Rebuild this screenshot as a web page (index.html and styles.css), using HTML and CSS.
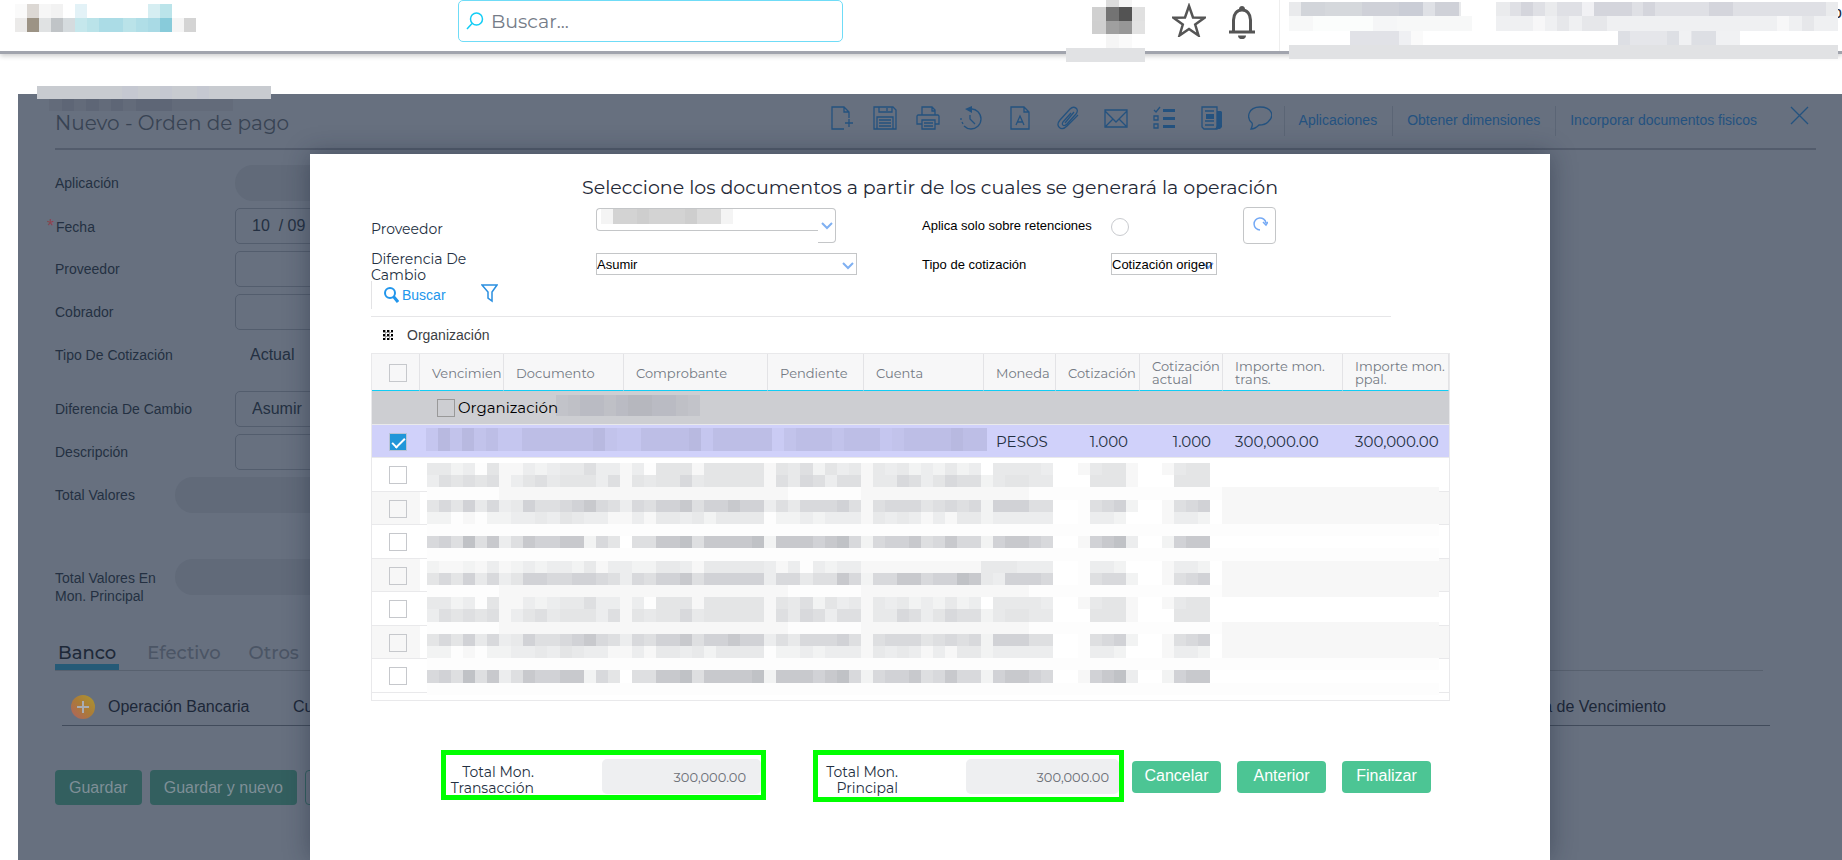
FILE: index.html
```html
<!DOCTYPE html>
<html lang="es">
<head>
  <meta charset="UTF-8">
  <meta name="viewport" content="width=device-width, initial-scale=1.0">
  <title>Nuevo - Orden de pago</title>
  <link rel="stylesheet" href="styles.css">
</head>
<body>
  <header class="topbar">
    <svg class="logo" width="182" height="32" viewBox="0 0 182 32" shape-rendering="crispEdges" aria-hidden="true">
      <path fill="#fafafa" d="M0 4h12v14H0z"/><path fill="#dcd8d4" d="M12 4h12v14H12z"/><path fill="#f6f6f6" d="M24 4h12v14H24z"/><path fill="#f2f2f2" d="M36 4h12v14H36z"/><path fill="#e3f2f7" d="M60 4h12v14H60z"/>
      <path fill="#d6eef2" d="M133 4h12v14h-12z"/><path fill="#bbe4ea" d="M145 4h12v14h-12z"/>
      <path fill="#ebeae9" d="M0 18h12v14H0z"/><path fill="#9c9385" d="M12 18h12v14H12z"/><path fill="#e0e2e3" d="M24 18h12v14H24z"/><path fill="#c0c4c7" d="M36 18h12v14H36z"/><path fill="#d5dbde" d="M48 18h12v14H48z"/>
      <path fill="#c5e7ec" d="M60 18h12v14H60z"/><path fill="#bae3e9" d="M72 18h12v14H72z"/><path fill="#abdce6" d="M84 18h24v14H84z"/><path fill="#bae3e9" d="M108 18h13v14h-13z"/><path fill="#b0dee7" d="M121 18h12v14h-12z"/><path fill="#a9dae5" d="M133 18h12v14h-12z"/><path fill="#88cbda" d="M145 18h12v14h-12z"/><path fill="#f5f5f5" d="M157 18h12v14h-12z"/><path fill="#d4d4d4" d="M169 18h12v14h-12z"/>
    </svg>
    <div class="search">
      <svg width="18" height="18" viewBox="0 0 18 18" fill="none" stroke="#12cdf5" stroke-width="1.5"><circle cx="10.500" cy="7" r="6"/><path d="M6 11.500L1 17"/></svg>
      <input type="text" placeholder="Buscar..." aria-label="Buscar">
    </div>
    <div class="top-actions">
      <svg class="user-mask" width="79" height="62" viewBox="0 0 79 62" shape-rendering="crispEdges" aria-hidden="true">
        <path fill="#dcdcdc" d="M40 0h13v7H40z"/><path fill="#f5f5f5" d="M53 0h13v7H53z"/>
        <path fill="#d0d0d0" d="M26 7h14v14H26z"/><path fill="#737373" d="M40 7h13v14H40z"/><path fill="#535353" d="M53 7h13v14H53z"/><path fill="#e0e0e0" d="M66 7h13v14H66z"/>
        <path fill="#cfcfcf" d="M26 21h14v13H26z"/><path fill="#9f9f9f" d="M40 21h13v13H40z"/><path fill="#979797" d="M53 21h13v13H53z"/><path fill="#e2e2e2" d="M66 21h13v13H66z"/>
        <path fill="#f5f5f5" d="M40 34h13v14H40z"/><path fill="#fafafa" d="M53 34h13v14H53z"/>
        <path fill="#e1e2e4" d="M0 48h79v14H0z"/>
      </svg>
      <svg class="star" width="34" height="34" viewBox="0 0 34 34" fill="none" stroke="#555" stroke-width="2.500"><path d="M17 3l4 11.500 11.500.2-9.300 6.800 3.300 11-9.500-6.500-9.500 6.500 3.300-11-9.300-6.800L13 14.500z"/></svg>
      <svg class="bell" width="26" height="34" viewBox="0 0 26 34"><path fill="none" stroke="#555" stroke-width="3" d="M4.500 27V15c0-6 3.500-10 8.500-10s8.500 4 8.500 10v12"/><path fill="#555" d="M10 4c0-4 6-4 6 0zM0 25.500h26v3H0zM9 30.500h8c0 5-8 5-8 0z"/></svg>
      <div class="account">
        <svg width="549" height="59" viewBox="0 0 549 59" shape-rendering="crispEdges" aria-hidden="true">
          <path fill="#e9eaec" d="M0 2h172v14H0z"/><path fill="#d2d5da" d="M12 2h24v14H12z"/><path fill="#d5d8dc" d="M36 2h37v14H36z"/><path fill="#cfd1d8" d="M73 2h37v14H73z"/><path fill="#cacdd6" d="M110 2h24v14h-24z"/><path fill="#dfe1e6" d="M134 2h12v14h-12z"/><path fill="#cfd1d8" d="M146 2h24v14h-24z"/>
          <path fill="#f7f8f8" d="M0 16h183v15H0z"/><path fill="#fbfdfc" d="M24 16h60v15H24z"/><path fill="#f5f6f7" d="M84 16h24v15H84z"/>
          <path fill="#e1e2e7" d="M61 31h49v14H61z"/><path fill="#eff0f3" d="M110 31h12v14h-12z"/><path fill="#fafafa" d="M122 31h12v14h-12z"/>
          <path fill="#dfe0e5" d="M207 2h342v14H207z"/><path fill="#f1f1f4" d="M293 2h12v14h-12z"/><path fill="#d4d5dc" d="M232 2h12v14h-12zM305 2h38v14h-38zM354 2h12v14h-12zM420 2h24v14h-24z"/><path fill="#eaebed" d="M207 2h14v14h-14zM537 2h12v14h-12zM256 2h12v14h-12z"/>
          <path fill="#eff0f2" d="M207 16h342v15H207z"/><path fill="#e6e7ea" d="M268 16h12v15h-12zM293 16h25v15h-25zM513 16h12v15h-12z"/><path fill="#f7f7f8" d="M244 16h12v15h-12zM488 16h12v15h-12z"/>
          <path fill="#e5e6ea" d="M329 31h100v14H329z"/><path fill="#dddfe4" d="M329 31h12v14h-12zM378 31h12v14h-12zM403 31h24v14h-24z"/><path fill="#f0f1f3" d="M390 31h12v14h-12zM427 31h24v14h-24z"/>
          <path fill="#e1e2e4" d="M0 45h549v14H0z"/>
        </svg>
        <span>o</span>
      </div>
    </div>
  </header>

  <main class="panel">
    <svg class="crumb-mask" width="234" height="25" viewBox="0 0 234 25" shape-rendering="crispEdges" aria-hidden="true">
      <path fill="#c8cbd0" d="M0 0h234v13H0z"/><path fill="#c5c8d1" d="M85 0h16v13H85zM123 0h12v13h-12zM160 0h12v13h-12z"/>
      <path fill="#636b7a" d="M12 13h184v12H12z"/><path fill="#5e6676" d="M25 13h12v12H25zM49 13h13v12H49zM74 13h12v12H74zM99 13h36v12H99z"/>
    </svg>
    <div class="panel-head">
      <h1>Nuevo - Orden de pago</h1>
      <div class="tools">
        <div class="tool-group">
          <button aria-label="Nuevo"><svg width="24" height="24" viewBox="0 0 24 24"><path d="M14 23H2V1h12l5 5v6M14 1v5h5M19 13v8M15 17h8"/></svg></button>
          <button aria-label="Guardar"><svg width="24" height="24" viewBox="0 0 24 24"><path d="M1 1h19l3 3v19H1zM6 1v5h13V1M14 2v3M4 23V11h16v12M6 14h12M6 17h12M6 20h12"/></svg></button>
          <button aria-label="Imprimir"><svg width="24" height="24" viewBox="0 0 24 24"><path d="M6 9V1h10l3 3v5M16 1v4h3M6 18H1v-8l1-1h20l1 1v8h-4M6 14h13v9H6zM8 17h9M8 20h9"/></svg></button>
          <button aria-label="Historial"><svg width="24" height="24" viewBox="0 0 24 24"><path d="M13 3c4 0 9 4 9 10s-5 10-10 10c-3 0-5-1-7-3M4 18l-1-2M2 14v-2M11 9v4l5 5"/><path class="solid" d="M6 3l7-3v7z"/></svg></button>
        </div>
        <div class="tool-group wide">
          <button aria-label="Texto"><svg width="24" height="24" viewBox="0 0 24 24"><path d="M3 1h13l5 5v17H3zM16 1v5h5M8 19l4-9 4 9M9 16h6"/></svg></button>
          <button aria-label="Adjuntar"><svg width="24" height="24" viewBox="0 0 24 24"><path d="M15 7l-8 9c-2 3 1 5 4 2l9-10c4-5-2-9-6-5L4 14c-5 6 1 12 7 6L22 9M18 6l-9 11"/></svg></button>
          <button aria-label="Correo"><svg width="24" height="24" viewBox="0 0 24 24"><path d="M1 4h22v17H1zM1 5l11 11L23 5M2 20l7-7M22 20l-7-7"/></svg></button>
          <button aria-label="Tareas"><svg width="24" height="24" viewBox="0 0 24 24"><path d="M2 4l2 2 4-5M2 10h4v4H2zM2 18h4v4H2z"/><path class="solid" d="M11 3h12v3H11zM11 11h12v3H11zM11 19h12v3H11z"/></svg></button>
          <button aria-label="Noticias"><svg width="24" height="24" viewBox="0 0 24 24"><path d="M2 1h15v22H4l-2-2zM5 5h9M5 15h9M5 19h9"/><path class="solid" d="M6 8h8v5H6zM17 5h4l1 1v15l-2 2h-5l2-3z"/></svg></button>
          <button aria-label="Comentar"><svg width="24" height="24" viewBox="0 0 24 24"><path d="M4 17C-2 12 0 1 12 1s15 9 8 15c-3 3-7 3-9 3-2 2-5 4-8 4 1-2 2-4 1-6z"/></svg></button>
        </div>
        <a href="#">Aplicaciones</a>
        <a href="#">Obtener dimensiones</a>
        <a href="#">Incorporar documentos fisicos</a>
        <button class="close" aria-label="Cerrar"><svg width="19" height="19" viewBox="0 0 19 19"><path d="M1 1l17 17M18 1L1 18"/></svg></button>
      </div>
    </div>

    <form class="order-form">
      <div class="row"><label for="aplicacion">Aplicación</label><input id="aplicacion" class="pill" disabled></div>
      <div class="row required"><label for="fecha">Fecha</label><input id="fecha" value="10  / 09"></div>
      <div class="row"><label for="proveedor">Proveedor</label><input id="proveedor"></div>
      <div class="row"><label for="cobrador">Cobrador</label><input id="cobrador"></div>
      <div class="row plain"><label for="tipo">Tipo De Cotización</label><input id="tipo" value="Actual" readonly></div>
      <div class="row"><label for="diferencia">Diferencia De Cambio</label><input id="diferencia" value="Asumir"></div>
      <div class="row"><label for="descripcion">Descripción</label><input id="descripcion"></div>
      <div class="row total"><label for="valores">Total Valores</label><input id="valores" class="pill" disabled></div>
      <div class="row total"><label for="principal">Total Valores En Mon. Principal</label><input id="principal" class="pill" disabled></div>
    </form>

    <nav class="tabs">
      <a href="#" class="active">Banco</a>
      <a href="#">Efectivo</a>
      <a href="#">Otros</a>
    </nav>
    <div class="bank-row">
      <button class="add" aria-label="Agregar"><svg width="24" height="24" viewBox="0 0 24 24"><defs><linearGradient id="sun" x1="0" y1="1" x2="1" y2="0"><stop offset="0" stop-color="#b06262"/><stop offset=".5" stop-color="#ab7b38"/><stop offset="1" stop-color="#ab9730"/></linearGradient></defs><circle cx="12" cy="12" r="12" fill="url(#sun)"/><path d="M12 6v12M6 12h12" stroke="#a9adb3" stroke-width="2"/></svg></button>
      <span class="bank">Operación Bancaria</span>
      <span>Cuenta</span>
      <span class="due">Fecha de Vencimiento</span>
    </div>
    <div class="form-buttons">
      <button>Guardar</button>
      <button>Guardar y nuevo</button>
      <button class="outline">Cancelar</button>
    </div>

    <section class="modal" role="dialog" aria-labelledby="modal-title">
      <h2 id="modal-title">Seleccione los documentos a partir de los cuales se generará la operación</h2>

      <div class="filters">
        <label for="f-prov">Proveedor</label>
        <div class="picker">
          <input id="f-prov" type="text">
          <svg class="mask" width="132" height="15" viewBox="0 0 132 15" shape-rendering="crispEdges" aria-hidden="true"><path fill="#f4f4f4" d="M0 0h132v15H0z"/><path fill="#d3d3d3" d="M12 0h84v15H12z"/><path fill="#cecece" d="M36 0h12v15H36zM84 0h12v15H84z"/><path fill="#dadada" d="M96 0h24v15H96z"/></svg>
          <button aria-label="Abrir"><svg width="12" height="8" viewBox="0 0 12 8"><path d="M1 1l5 5 5-5"/></svg></button>
        </div>
        <label class="small" for="f-ret">Aplica solo sobre retenciones</label>
        <div class="with-refresh">
          <input id="f-ret" type="radio">
          <button class="refresh" aria-label="Actualizar"><svg width="16" height="16" viewBox="0 0 16 16"><path d="M8 14a6 6 0 1 1 6-7M11 6l3 3 2-3"/></svg></button>
        </div>

        <label class="second-line" for="f-dif">Diferencia De Cambio</label>
        <div class="combo">
          <svg width="12" height="8" viewBox="0 0 12 8"><path d="M1 1l5 5 5-5"/></svg>
          <select id="f-dif"><option>Asumir</option></select>
        </div>
        <label class="small second-line" for="f-cot">Tipo de cotización</label>
        <div class="combo narrow">
          <svg width="12" height="8" viewBox="0 0 12 8"><path d="M1 1l5 5 5-5"/></svg>
          <select id="f-cot"><option>Cotización origen</option></select>
        </div>
      </div>

      <div class="grid-tools">
        <button class="find"><svg width="15" height="16" viewBox="0 0 15 16" fill="none" stroke="#2196ec"><circle cx="6" cy="6" r="5" stroke-width="2"/><path d="M9.500 9.500L14 15" stroke-width="3"/></svg>Buscar</button>
        <button aria-label="Filtrar"><svg width="17" height="19" viewBox="0 0 17 19" fill="none" stroke="#2a8fe0" stroke-width="1.500"><path d="M1 1h15l-5 7v9l-4-3V8z"/></svg></button>
      </div>
      <div class="group-by">
        <svg width="10" height="10" viewBox="0 0 10 10" shape-rendering="crispEdges"><path d="M0 0h2v2H0zM4 0h2v2H4zM8 0h2v2H8zM0 4h2v2H0zM4 4h2v2H4zM8 4h2v2H8zM0 8h2v2H0zM4 8h2v2H4zM8 8h2v2H8z"/><path fill="#000" fill-opacity=".4" d="M0 2h10v1H0zM0 6h10v1H0zM2 0h1v10H2zM6 0h1v10H6z"/></svg>
        <span>Organización</span>
      </div>

      <div class="grid">
        <table>
          <colgroup>
            <col class="c-check"><col class="c-venc"><col class="c-doc"><col class="c-comp"><col class="c-pend"><col class="c-doc"><col class="c-mon"><col class="c-cot"><col class="c-act"><col class="c-doc"><col>
          </colgroup>
          <thead>
            <tr>
              <th><input type="checkbox" aria-label="Seleccionar todo"></th>
              <th>Vencimien</th>
              <th>Documento</th>
              <th>Comprobante</th>
              <th>Pendiente</th>
              <th>Cuenta</th>
              <th>Moneda</th>
              <th>Cotización</th>
              <th>Cotización actual</th>
              <th>Importe mon. trans.</th>
              <th>Importe mon. ppal.</th>
            </tr>
          </thead>
          <tbody>
            <tr class="group">
              <td colspan="11">
                <div class="group-cell"><input type="checkbox" id="org"><label for="org">Organización</label><div class="mosaic dark" data-rows="345545665543"></div></div>
              </td>
            </tr>
            <tr class="selected">
              <td><input type="checkbox" aria-label="Seleccionar" checked></td>
              <td colspan="5"><div class="mosaic dark wide" data-rows="36464533555555643355556355555245554555345555655"></div></td>
              <td>PESOS</td>
              <td class="num">1.000</td>
              <td class="num">1.000</td>
              <td>300,000.00</td>
              <td>300,000.00</td>
            </tr>
            <tr><td><input type="checkbox" aria-label="Seleccionar"></td><td colspan="9"></td><td></td></tr>
            <tr><td><input type="checkbox" aria-label="Seleccionar"></td><td colspan="9"></td><td></td></tr>
            <tr><td><input type="checkbox" aria-label="Seleccionar"></td><td colspan="9"></td><td></td></tr>
            <tr><td><input type="checkbox" aria-label="Seleccionar"></td><td colspan="9"></td><td></td></tr>
            <tr><td><input type="checkbox" aria-label="Seleccionar"></td><td colspan="9"></td><td></td></tr>
            <tr><td><input type="checkbox" aria-label="Seleccionar"></td><td colspan="9"></td><td></td></tr>
            <tr><td><input type="checkbox" aria-label="Seleccionar"></td><td colspan="9"></td><td></td></tr>
          </tbody>
        </table>
        <div class="mosaic cover" id="cover"></div>
      </div>

      <div class="footer">
        <div class="sum"><label for="t-trans">Total Mon. Transacción</label><input id="t-trans" value="300,000.00" readonly></div>
        <div class="sum second"><label for="t-ppal">Total Mon. Principal</label><input id="t-ppal" value="300,000.00" readonly></div>
        <div class="actions">
          <button>Cancelar</button>
          <button>Anterior</button>
          <button>Finalizar</button>
        </div>
      </div>
    </section>
  </main>

  <script>
    // one string per band, one character per cell: 0 is empty, B is the darkest
    var bandA = "553416224345574424166626666626573645254534353405555400256620025660";
    var bandB = "476767246756664726566856666627587477255874687735665500066620006660";
    var bandC = "111111222222222222222222222222111111222222222222221111111111111111";
    var bandD = "6869584597789A8748799A799A9947588897278886787839997700178930027890";
    var bandE = "331213344546544224255453555513343444254542425534444400144300024430";
    var bandF = "111111111111111111111111111111111111111111111111111111111111111111";
    var bandG = "897B7A47A99AA386077AAB7AAAAB3AAA9AB83899A78A8839AA980029AB40039AA0";
    var bandI = "322324234344352443355425555542414344222222222255544400144300024430";
    var bandJ = "686958469988998748799A799999488577A8388AA899BA54999800178830027890";
    var bands = [
      [bandA, "0"], [bandB, "0"], [bandC, "2"], [bandD, "2"], [bandE, "2"], [bandF, "1"],
      [bandG, "0"], [bandF, "1"], [bandI, "2"], [bandJ, "2"], [bandC, "2"],
      [bandA, "0"], [bandB, "0"], [bandC, "2"], [bandD, "2"], [bandE, "2"], [bandF, "1"],
      [bandG, "0"], [bandF, "1"]
    ];

    function drawBand(box, text) {
      var html = "<div class='band'>";
      text.split("").forEach(function(level) {
        html += "<i class='l" + level + "'></i>";
      });
      box.innerHTML += html + "</div>";
    }

    document.querySelectorAll("[data-rows]").forEach(function(box) {
      drawBand(box, box.dataset.rows);
    });

    var cover = document.getElementById("cover");
    bands.forEach(function(band) {
      drawBand(cover, band[0].padEnd(84, band[1]));
    });
  </script>
</body>
</html>
```
FILE: styles.css
```css
* {
  box-sizing: border-box;
}

body {
  margin: 0;
  min-height: 100vh;
  display: flex;
  flex-direction: column;
  overflow: hidden;
  background: #fff;
  color: #1f2937;
  font-family: "Liberation Sans", Arial, sans-serif;
  font-size: 14px;
}

button, input, select {
  font-family: inherit;
  margin: 0;
}

button {
  border: 0;
  padding: 0;
  background: none;
  cursor: pointer;
}

/* top bar */
.topbar {
  display: flex;
  align-items: flex-start;
  height: 54px;
  padding-left: 15px;
  border-bottom: 3px solid #a1a4ad;
  box-shadow: 0 2px 5px rgba(0, 0, 0, 0.2);
}

.search {
  display: flex;
  align-items: center;
  gap: 5px;
  width: 385px;
  height: 42px;
  margin-left: 261px;
  padding: 0 7px;
  border: 1px solid #6fdcf7;
  border-radius: 5px;
}

.search input {
  flex: 1;
  border: 0;
  outline: 0;
  font-family: "Montserrat", "Inter", sans-serif;
  font-size: 19px;
  color: #6b7280;
}

.search input::placeholder {
  color: #757c88;
}

.top-actions {
  display: flex;
  align-items: flex-start;
  margin-left: auto;
}

.star {
  margin: 3px 23px 0 27px;
}

.bell {
  margin-top: 5px;
}

.account {
  display: flex;
  height: 51px;
  margin-left: 24px;
  padding-left: 9px;
  border-left: 1px solid #eee;
}

.account span {
  width: 4px;
  padding-top: 4px;
  overflow: hidden;
  direction: rtl;
  font-size: 16px;
}

.user-mask, .account svg {
  flex-shrink: 0;
  overflow: visible;
}

/* dimmed page under the dialog */
.panel {
  position: relative;
  flex: 1;
  margin: 40px 0 0 18px;
  padding: 0 26px 0 37px;
  background: #67707f;
  color: #243042;
}

.crumb-mask {
  position: absolute;
  top: -8px;
  left: 19px;
}

.panel-head {
  display: flex;
  justify-content: space-between;
  height: 56px;
  border-bottom: 2px solid #535c6c;
}

.panel-head h1 {
  margin: 17px 0 0;
  font: 400 20px/24px "Montserrat", "Inter", sans-serif;
  color: #384353;
}

.tools {
  display: flex;
  align-items: flex-start;
  padding: 12px 7px 0 0;
}

.tools svg {
  display: block;
  fill: none;
  stroke: #24527f;
  stroke-width: 1.3;
}

.tools .solid {
  fill: #24527f;
  stroke: none;
}

.tool-group {
  display: flex;
  gap: 19px;
  margin-right: 25px;
}

.tool-group.wide {
  gap: 24px;
  margin-right: 12px;
}

.tools a {
  height: 30px;
  padding: 0 15px 0 14px;
  border-left: 1px solid #5b6575;
  line-height: 29px;
  color: #24527f;
  text-decoration: none;
}

.close {
  margin-left: 18px;
}

.order-form {
  padding-top: 15px;
}

.row {
  display: flex;
  align-items: center;
  height: 36px;
  margin-bottom: 7px;
}

.row label {
  width: 180px;
}

.row input {
  width: 400px;
  height: 36px;
  padding: 0 16px;
  border: 1px solid #535d6d;
  border-radius: 5px;
  background: transparent;
  font-size: 16px;
  color: #243042;
}

.row .pill {
  border: 0;
  border-radius: 18px;
  background: #616a79;
}

.required label::before {
  content: "*";
  margin: 0 2px 0 -8px;
  font-size: 18px;
  line-height: 16px;
  color: #8d4450;
}

.plain {
  margin-bottom: 18px;
}

.plain input {
  border-color: transparent;
  padding: 0 14px;
}

.total label {
  width: 120px;
  line-height: 18px;
}

.total + .total {
  margin-top: 46px;
}

.total + .total label {
  padding-top: 20px;
}

.tabs {
  display: flex;
  gap: 28px;
  margin: 40px 53px 0 0;
  border-bottom: 1px solid #58616f;
}

.tabs a {
  height: 35px;
  font: 500 18px/36px "Montserrat", "Inter", sans-serif;
  color: #4b5565;
  text-decoration: none;
}

.tabs .active {
  padding: 0 3px;
  margin-bottom: -1px;
  border-bottom: 6px solid #255a77;
  color: #1e2939;
}

.bank-row {
  display: flex;
  align-items: center;
  height: 55px;
  margin: 0 46px 0 7px;
  padding-top: 17px;
  padding-left: 9px;
  border-bottom: 1px solid #414b5b;
  font-size: 16px;
  color: #1c2738;
}

.add svg {
  display: block;
}

.bank {
  width: 185px;
  margin-left: 13px;
}

.due {
  margin-left: auto;
  padding-right: 104px;
}

.form-buttons {
  display: flex;
  gap: 8px;
  margin-top: 44px;
}

.form-buttons button {
  height: 35px;
  padding: 0 14px;
  border-radius: 4px;
  background: #335f5f;
  font-size: 16px;
  color: #7f8f97;
}

.form-buttons .outline {
  border: 1px solid #335f5f;
  background: transparent;
}

/* dialog */
.modal {
  position: absolute;
  top: 60px;
  right: 292px;
  bottom: 0;
  left: 292px;
  padding: 20px 100px 0 61px;
  background: #fff;
  box-shadow: 0 0 24px rgba(20, 30, 50, 0.4);
}

.modal h2 {
  margin: 0 -100px 0 -61px;
  font: 400 19px/28px "Montserrat", "Inter", sans-serif;
  text-align: center;
  color: #1f2937;
}

.filters {
  display: grid;
  grid-template-columns: 225px 326px 189px 1fr;
  grid-template-rows: 44px 35px;
  align-items: start;
  padding-top: 5px;
}

.filters label {
  max-width: 120px;
  padding-top: 14px;
  font: 400 14px/16px "Montserrat", "Inter", sans-serif;
}

.filters .small {
  max-width: none;
  padding-top: 11px;
  font: 13px/16px "Liberation Sans", Arial, sans-serif;
  color: #000;
}

.filters .second-line {
  padding-top: 0;
}

.filters .small.second-line {
  padding-top: 6px;
}

.picker {
  display: flex;
  align-items: flex-start;
  position: relative;
  width: 240px;
  padding-top: 1px;
}

.picker input {
  flex: 1;
  min-width: 0;
  height: 23px;
  border: 1px solid #c4c6c8;
  border-right: 0;
  border-radius: 4px 0 0 4px;
  background: transparent;
}

.picker .mask {
  position: absolute;
  top: 2px;
  left: 5px;
}

.picker button {
  width: 18px;
  height: 35px;
  border: 1px solid #c4c6c8;
  border-left: 0;
  border-radius: 0 4px 4px 0;
}

.picker button svg, .combo svg {
  fill: none;
  stroke: #7fb0f2;
  stroke-width: 2;
}

.with-refresh {
  display: flex;
  align-items: flex-start;
}

.with-refresh input {
  appearance: none;
  width: 18px;
  height: 18px;
  margin: 11px 114px 0 0;
  border: 1px solid #c9cbcf;
  border-radius: 50%;
}

.refresh {
  width: 33px;
  height: 37px;
  border: 1px solid #c4c6c8;
  border-radius: 4px;
}

.refresh svg {
  fill: none;
  stroke: #74a9f5;
  stroke-width: 1.5;
}

.combo {
  position: relative;
  width: 261px;
  padding-top: 2px;
}

.combo.narrow {
  width: 106px;
}

.combo select {
  position: relative;
  appearance: none;
  width: 100%;
  height: 22px;
  padding: 0;
  border: 1px solid #c4c6c8;
  border-radius: 0;
  background: transparent;
  font-size: 13px;
  color: #000;
}

.combo svg {
  position: absolute;
  top: 11px;
  right: 3px;
}

.grid-tools {
  display: flex;
  align-items: center;
  height: 28px;
  gap: 35px;
  margin: -5px 0 7px;
  padding: 0 0 0 12px;
  border-left: 1px solid #e3e3e5;
}

.find {
  display: flex;
  align-items: center;
  gap: 3px;
  font-size: 14px;
  color: #2196ec;
}

.group-by {
  display: flex;
  align-items: center;
  gap: 14px;
  height: 37px;
  margin-right: 59px;
  padding-left: 12px;
  border-top: 1px solid #e6e6e8;
  color: #3c4043;
}

.grid {
  position: relative;
  height: 348px;
  border: 1px solid #e9e9eb;
}

table {
  width: 100%;
  table-layout: fixed;
  border-collapse: separate;
  border-spacing: 0;
  font-family: "Montserrat", "Inter", sans-serif;
}

.c-check { width: 48px; }
.c-venc { width: 84px; }
.c-doc { width: 120px; }
.c-comp { width: 144px; }
.c-pend { width: 96px; }
.c-mon { width: 72px; }
.c-cot { width: 84px; }
.c-act { width: 83px; }

th {
  height: 37px;
  padding: 2px 0 0 12px;
  overflow: hidden;
  border-right: 1px solid #e3e3e6;
  border-bottom: 1px solid #12cdf5;
  background: #f7f7f8;
  font-size: 13px;
  font-weight: 400;
  line-height: 13px;
  text-align: left;
  color: #737983;
}

td {
  height: 33px;
  padding: 2px 0 0 12px;
  border-bottom: 1px solid #e9e9eb;
  font-size: 15px;
  line-height: 16px;
}

tr:nth-child(odd) td {
  height: 34px;
}

tbody tr:nth-child(n + 3):nth-child(even) td:first-child,
tbody tr:nth-child(n + 3):nth-child(even) td:last-child {
  background: #f7f7f7;
}

th:first-child, td:first-child {
  padding: 1px 0 0 17px;
}

tbody .group td {
  height: 34px;
  padding-left: 65px;
  background: #cdced2;
}

.group-cell {
  display: flex;
  align-items: center;
  gap: 3px;
  font-size: 15px;
  color: #000;
}

.group-cell .mosaic {
  width: 144px;
  height: 21px;
  margin-top: -5px;
  margin-left: -5px;
}

tbody .selected td {
  height: 33px;
  background: #d0d1fa;
}

.selected .mosaic {
  width: 561px;
  height: 23px;
  margin: -5px 0 0 -6px;
}

.selected .num {
  padding-right: 12px;
  text-align: right;
}

.grid input {
  display: block;
  appearance: none;
  width: 18px;
  height: 18px;
  border: 1px solid #c6c8cc;
}

.group input {
  border-color: #999;
}

.grid input:checked {
  border-color: #b9c3d6;
  background: #2196d9;
}

.grid input:checked::after {
  content: "";
  display: block;
  width: 11px;
  height: 5px;
  margin: 4px 0 0 2px;
  border: solid #fff;
  border-width: 0 0 2px 2px;
  transform: rotate(-45deg);
}

/* pixelated cells over private data */
.mosaic {
  display: flex;
  flex-direction: column;
}

.cover {
  position: absolute;
  top: 109px;
  right: 10px;
  left: 55px;
  height: 232px;
  background: #fff;
}

.band {
  display: flex;
  flex: 1;
}

.band i {
  flex: 1;
}

.l1 { background: #fdfdfd; }
.l2 { background: #f7f7f7; }
.l3 { background: #f2f3f3; }
.l4 { background: #ecedee; }
.l5 { background: #e8e9ea; }
.l6 { background: #e4e5e6; }
.l7 { background: #dedfe1; }
.l8 { background: #d8d9dc; }
.l9 { background: #d1d2d6; }
.lA { background: #c8c9cd; }
.lB { background: #c0c2c6; }

.dark .l2 { background: rgba(40, 40, 70, 0.03); }
.dark .l3 { background: rgba(40, 40, 70, 0.06); }
.dark .l4 { background: rgba(40, 40, 70, 0.08); }
.dark .l5 { background: rgba(40, 40, 70, 0.11); }
.dark .l6 { background: rgba(40, 40, 70, 0.14); }

/* dialog footer */
.footer {
  display: flex;
  align-items: flex-start;
  margin: 49px -41px 0 70px;
}

.sum {
  display: flex;
  align-items: flex-start;
  width: 325px;
  height: 50px;
  padding-top: 4px;
  border: 5px solid #0f0;
}

.sum label {
  width: 88px;
  padding-top: 5px;
  font: 400 14px/16px "Montserrat", "Inter", sans-serif;
  text-align: right;
}

.sum input {
  flex: 1;
  min-width: 0;
  height: 35px;
  margin-left: 68px;
  padding: 0 15px;
  border: 0;
  border-radius: 5px;
  background: #eeeff1;
  font-family: "Montserrat", "Inter", sans-serif;
  font-size: 13px;
  text-align: right;
  color: #6b6e75;
}

.second {
  width: 311px;
  height: 52px;
  margin-left: 47px;
}

.second label {
  width: 80px;
}

.second input {
  padding: 0 10px;
}

.actions {
  display: flex;
  gap: 16px;
  padding: 11px 0 0 8px;
}

.actions button {
  width: 89px;
  height: 32px;
  padding-bottom: 2px;
  border-radius: 4px;
  background: #4cc594;
  font-size: 16px;
  color: #fff;
}
```
